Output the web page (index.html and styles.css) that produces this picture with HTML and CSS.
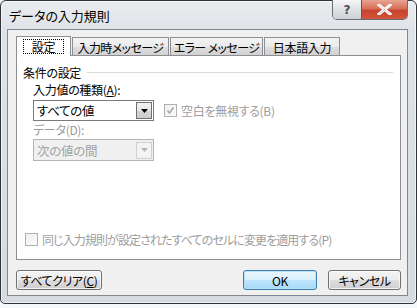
FILE: index.html
```html
<!DOCTYPE html>
<html lang="ja">
<head>
<meta charset="utf-8">
<title>データの入力規則</title>
<link rel="stylesheet" href="styles.css">
</head>
<body>
<div class="window">
  <div class="titlebar">
    <span class="title">データの入力規則</span>
    <div class="caption-buttons">
      <div class="cap help">?</div>
      <div class="cap close">
        <svg width="15" height="11" viewBox="0 0 15 11"><path d="M2 1 L13 10 M13 1 L2 10" stroke="#fff" stroke-width="3" stroke-linecap="square"/><path d="M2 1 L13 10 M13 1 L2 10" stroke="#6a2a20" stroke-width="0.6" opacity="0.35"/></svg>
      </div>
    </div>
  </div>
  <div class="client">
    <div class="tabs">
      <div class="tab tab-active tab-w1"><span class="focus">設定</span></div>
      <div class="tab tab-w2">入力時メッセージ</div>
      <div class="tab tab-w3">エラー メッセージ</div>
      <div class="tab tab-w4">日本語入力</div>
    </div>
    <div class="panel">
      <div class="group-head"><span>条件の設定</span><span class="rule"></span></div>
      <div class="field-block">
        <div class="label">入力値の種類(<u>A</u>):</div>
        <div class="row">
          <div class="select">
            <span class="select-text">すべての値</span>
            <span class="drop"><svg width="7" height="4" viewBox="0 0 7 4"><path d="M0 0H7L3.5 4Z" fill="#000"/></svg></span>
          </div>
          <label class="check disabled"><span class="box"><svg width="9" height="9" viewBox="0 0 9 9"><path d="M1.5 4.5 L3.5 7 L7.5 1.5" stroke="#a9a9a9" stroke-width="1.6" fill="none"/></svg></span>空白を無視する(B)</label>
        </div>
        <div class="label muted label2">データ(D):</div>
        <div class="select select-disabled">
          <span class="select-text">次の値の間</span>
          <span class="drop"><svg width="7" height="4" viewBox="0 0 7 4"><path d="M0 0H7L3.5 4Z" fill="#b4b4b4"/></svg></span>
        </div>
      </div>
      <label class="check disabled bottom-check"><span class="box"></span>同じ入力規則が設定されたすべてのセルに変更を適用する(P)</label>
    </div>
    <div class="buttons">
      <button class="btn btn-clear">すべてクリア(<u>C</u>)</button>
      <span class="spacer"></span>
      <button class="btn btn-ok">OK</button>
      <button class="btn btn-cancel">キャンセル</button>
    </div>
  </div>
</div>
</body>
</html>
```

FILE: styles.css
```css
* { box-sizing: border-box; }
html, body { margin: 0; padding: 0; }
body {
  background: #f6f7f8;
  font-family: "Noto Sans CJK JP", "Noto Sans", sans-serif;
  font-feature-settings: "palt";
  font-size: 12px;
  letter-spacing: -0.3px;
  color: #000;
  width: 417px;
  height: 308px;
  overflow: hidden;
}
.window {
  width: 417px;
  height: 304px;
  border: 1px solid #2f3438;
  border-radius: 6px 6px 5px 5px;
  background: linear-gradient(180deg, #e9ecef 0px, #dfe3e7 30px, #d6dbe0 100%);
  box-shadow: inset 0 0 0 1px rgba(255,255,255,0.6);
  display: flex;
  flex-direction: column;
  padding: 0 8px 7px 6px;
}
.titlebar {
  height: 28px;
  display: flex;
  align-items: center;
}
.title {
  padding-left: 2px;
  font-size: 13px;
  letter-spacing: 0;
  margin-top: 1px;
}
.caption-buttons {
  margin-left: auto;
  align-self: flex-start;
  margin-top: -1px;
  display: flex;
  height: 20px;
  border: 1px solid #6b6f74;
  border-top: none;
  border-radius: 0 0 5px 5px;
  overflow: hidden;
}
.cap {
  height: 19px;
  display: flex;
  align-items: center;
  justify-content: center;
}
.help {
  width: 29px;
  background: linear-gradient(180deg, #f4f5f6 0%, #dfe2e5 50%, #cfd3d7 100%);
  color: #4a4e52;
  font-family: "DejaVu Sans", sans-serif;
  font-size: 12px;
  font-weight: bold;
  letter-spacing: 0;
  border-right: 1px solid #7a4b42;
}
.close {
  width: 45px;
  background: linear-gradient(180deg, #e8a493 0%, #d7705a 45%, #c5442c 55%, #d2563b 100%);
}
.client {
  flex: 1;
  background: #f0f0f0;
  border: 1px solid #838890;
  padding: 7px 6px 4px 8px;
  display: flex;
  flex-direction: column;
}
.tabs {
  display: flex;
  height: 18px;
  align-items: flex-end;
  position: relative;
  z-index: 1;
}
.tab {
  height: 18px;
  border: 1px solid #8c8e94;
  border-bottom: none;
  background: linear-gradient(180deg, #f3f3f3 0%, #ebebeb 50%, #dedede 51%, #d2d2d2 100%);
  display: flex;
  align-items: center;
  justify-content: center;
  font-size: 12px;
  padding-top: 1px;
  margin-right: 1px;
}
.tab-w1 { width: 55px; }
.tab-w2 { width: 97px; letter-spacing: -0.6px; }
.tab-w3 { width: 93px; letter-spacing: -0.6px; }
.tab-w4 { width: 76px; }
.tab-active {
  height: 20px;
  margin-bottom: -1px;
  background: #fff;
  padding-top: 0;
}
.focus {
  border: 1px dotted #000;
  padding: 0 8px;
  line-height: 13px;
  height: 15px;
  display: flex;
  align-items: center;
}
.panel {
  height: 205px;
  background: #fff;
  border: 1px solid #8c8e94;
  padding: 8px 6px 8px 6px;
  display: flex;
  flex-direction: column;
}
.group-head {
  display: flex;
  align-items: center;
  height: 16px;
}
.rule {
  flex: 1;
  height: 1px;
  background: #dcdcdc;
  margin-left: 6px;
  margin-right: 1px;
}
.field-block {
  padding-left: 10px;
  margin-top: 1px;
}
.label {
  height: 16px;
  line-height: 16px;
  margin-top: 1px;
}
.muted { color: #9a9a9a; }
.row {
  display: flex;
  align-items: center;
}
.select {
  width: 121px;
  height: 21px;
  border: 1px solid #7a7a7a;
  background: #fff;
  display: flex;
  align-items: center;
  padding: 1px;
  margin-top: 2px;
}
.select-text {
  flex: 1;
  padding-left: 2px;
  font-size: 12.5px;
}
.drop {
  width: 16px;
  height: 17px;
  border: 1px solid #707070;
  background: linear-gradient(180deg, #f2f2f2 0%, #e6e6e6 50%, #d6d6d6 51%, #cdcdcd 100%);
  display: flex;
  align-items: center;
  justify-content: center;
}
.select-disabled {
  background: #f0f0f0;
  border-color: #b5b5b5;
  height: 22px;
  margin-top: 1px;
}
.select-disabled .select-text { color: #a3a3a3; }
.select-disabled .drop {
  border-color: #d0d0d0;
  background: #f4f4f4;
}
.check {
  display: flex;
  align-items: center;
  font-size: 12px;
}
.check.disabled { color: #9d9d9d; }
.box {
  width: 13px;
  height: 13px;
  border: 1px solid #b1b1b1;
  background: linear-gradient(135deg, #f0f0f0, #fbfbfb);
  display: flex;
  align-items: center;
  justify-content: center;
  margin-right: 4px;
}
.row .check { margin-left: 10px; margin-top: 2px; }
.bottom-check {
  margin-top: auto;
  margin-left: 2px;
  margin-bottom: 3px;
  letter-spacing: -0.9px;
}
.buttons {
  display: flex;
  margin-top: 10px;
  height: 20px;
}
.spacer { flex: 1; }
.btn {
  font-family: inherit;
  font-feature-settings: "palt";
  font-size: 12px;
  letter-spacing: -0.4px;
  height: 20px;
  padding: 0;
  margin: 0;
  border: 1px solid #707070;
  border-radius: 3px;
  background: linear-gradient(180deg, #f4f4f4 0%, #ebebeb 50%, #dddddd 51%, #cfcfcf 100%);
  color: #000;
  box-shadow: inset 0 0 0 1px rgba(255,255,255,0.7);
}
.btn-clear { width: 86px; }
.btn-ok {
  width: 74px;
  border-color: #3c7fb1;
  background: linear-gradient(180deg, #eaf6fd 0%, #d9f0fc 50%, #bee6fd 51%, #a7d9f5 100%);
  box-shadow: inset 0 0 0 1px #b8e0f6;
}
.btn-cancel { width: 73px; margin-left: 11px; }
u { text-decoration: underline; text-underline-offset: 1px; }
```
